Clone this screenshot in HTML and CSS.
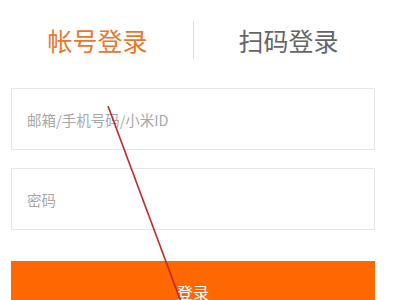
FILE: index.html
```html
<!DOCTYPE html>
<html lang="zh-CN">
<head>
    <meta charset="UTF-8">
    <meta name="viewport" content="width=device-width, initial-scale=1.0">
    <title>小米帐号登录</title>
    <link rel="stylesheet" href="styles.css">
</head>
<body>
    <div class="login">
        <div class="tabs">
            <span class="tab active">帐号登录</span>
            <span class="tab-divider"></span>
            <span class="tab">扫码登录</span>
        </div>
        <div class="field">
            <span class="placeholder">邮箱/手机号码/小米ID</span>
        </div>
        <div class="field">
            <span class="placeholder">密码</span>
        </div>
        <div class="submit">登录</div>
    </div>
    <!-- red annotation stroke drawn over the screenshot -->
    <svg class="mark" width="400" height="300" viewBox="0 0 400 300">
        <line x1="108" y1="106" x2="181" y2="302" stroke="#c4262b" stroke-width="1.6" />
    </svg>
</body>
</html>
```

FILE: styles.css
```css
body {
    margin: 0;
    overflow: hidden;
    background: #fff;
    font-family: "Noto Sans CJK SC", "Noto Sans", sans-serif;
}
.login {
    width: 364px;
    margin-left: 11px;
}
.tabs {
    height: 88px;
    display: flex;
    justify-content: center;
    align-items: center;
    gap: 45px;
    padding-bottom: 8px;
    box-sizing: border-box;
}
.tab {
    font-size: 25px;
    line-height: 30px;
    color: #666;
}
.tab.active {
    color: #e8772b;
}
.tab-divider {
    width: 1px;
    height: 38px;
    background: #dedede;
}
.field {
    height: 62px;
    border: 1px solid #e6e6e6;
    box-sizing: border-box;
    display: flex;
    align-items: center;
    padding-left: 15px;
    margin-bottom: 18px;
}
.placeholder {
    font-size: 14.5px;
    color: #a8a8a8;
}
.submit {
    margin-top: 31px;
    height: 60px;
    background: #ff6700;
    color: #fff;
    font-size: 16px;
    display: flex;
    justify-content: center;
    padding-top: 19px;
    box-sizing: border-box;
}
.mark {
    position: absolute;
    left: 0;
    top: 0;
}
```
